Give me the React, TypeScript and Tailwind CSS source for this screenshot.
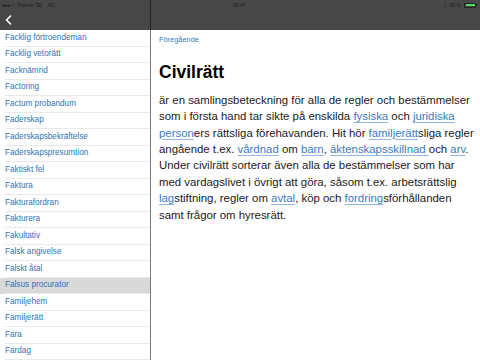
import React from "react";

const terms = [
  "Facklig förtroendeman",
  "Facklig vetorätt",
  "Facknämnd",
  "Factoring",
  "Factum probandum",
  "Faderskap",
  "Faderskapsbekräftelse",
  "Faderskapspresumtion",
  "Faktiskt fel",
  "Faktura",
  "Fakturafordran",
  "Fakturera",
  "Fakultativ",
  "Falsk angivelse",
  "Falskt åtal",
  "Falsus procurator",
  "Familjehem",
  "Familjerätt",
  "Fara",
  "Fardag",
];

const selected = "Falsus procurator";

function L({ children }: { children: React.ReactNode }) {
  return (
    <span className="text-[#3a7cc0] underline decoration-[#8fb6de] underline-offset-[2px]">
      {children}
    </span>
  );
}

export default function App() {
  return (
    <div
      className="w-[480px] h-[360px] flex overflow-hidden bg-white"
      style={{ fontFamily: '"Liberation Sans", Arial, sans-serif' }}
    >
      {/* Sidebar */}
      <div className="w-[150px] flex flex-col shrink-0">
        <div className="h-[30px] bg-[#474747] flex flex-col shrink-0">
          <div className="h-[10px] flex items-center gap-[3px] pl-[2px] text-[5px] text-[#222] leading-none">
            <span className="tracking-[-0.5px]">●●●○○</span>
            <span>Telenor SE</span>
            <span className="ml-[3px]">4G</span>
          </div>
          <div className="flex-1 flex items-center pl-[5px]">
            <svg width="7" height="10" viewBox="0 0 7 10" fill="none">
              <path d="M5.5 1 L1.5 5 L5.5 9" stroke="white" strokeWidth="1.6" strokeLinecap="round" strokeLinejoin="round" />
            </svg>
          </div>
        </div>
        <div className="flex flex-col">
          {terms.map((t) => (
            <div
              key={t}
              className={
                t === selected
                  ? "h-[16.5px] bg-[#d9d9d9] flex items-center"
                  : "h-[16.5px] flex items-center"
              }
            >
              <div className="ml-[5px] flex-1 h-full flex items-center border-b border-[#e9e9e9] text-[8.2px] text-[#2f74b5]">
                {t}
              </div>
            </div>
          ))}
        </div>
      </div>

      {/* Divider */}
      <div className="w-px flex flex-col shrink-0">
        <div className="h-[30px] bg-[#262626]" />
        <div className="flex-1 bg-[#7d7d7d]" />
      </div>

      {/* Content */}
      <div className="flex-1 flex flex-col">
        <div className="h-[30px] bg-[#474747] shrink-0">
          <div className="h-[10px] flex items-center text-[5px] leading-none text-[#222]">
            <span className="ml-[82px]">09:47</span>
            <div className="ml-auto mr-[3px] flex items-center gap-[3px]">
              <span>ᛒ</span>
              <span>99 %</span>
              <div className="flex items-center">
                <div className="w-[12px] h-[5px] border border-[#262626] p-[0.5px]">
                  <div className="w-full h-full bg-[#4cd964]" />
                </div>
                <div className="w-[1px] h-[2px] bg-[#262626]" />
              </div>
            </div>
          </div>
        </div>

        <div className="pl-[8px] pt-[5px]">
          <div className="text-[7.4px] leading-[10px] text-[#3a7cc0]">Föregående</div>
          <h1 className="mt-[16.5px] text-[17.5px] leading-[20px] font-bold text-black">Civilrätt</h1>
          <p className="mt-[10.3px] text-[11.4px] leading-[16.4px] text-[#1a1a1a] whitespace-nowrap">
            är en samlingsbeteckning för alla de regler och bestämmelser
            <br />
            som i första hand tar sikte på enskilda <L>fysiska</L> och <L>juridiska</L>
            <br />
            <L>person</L>ers rättsliga förehavanden. Hit hör <L>familjerätt</L>sliga regler
            <br />
            angående t.ex. <L>vårdnad</L> om <L>barn</L>, <L>äktenskapsskillnad </L>och <L>arv</L>.
            <br />
            Under civilrätt sorterar även alla de bestämmelser som har
            <br />
            med vardagslivet i övrigt att göra, såsom t.ex. arbetsrättslig
            <br />
            <L>lag</L>stiftning, regler om <L>avtal</L>, köp och <L>fordring</L>sförhållanden
            <br />
            samt frågor om hyresrätt.
          </p>
        </div>
      </div>
    </div>
  );
}
